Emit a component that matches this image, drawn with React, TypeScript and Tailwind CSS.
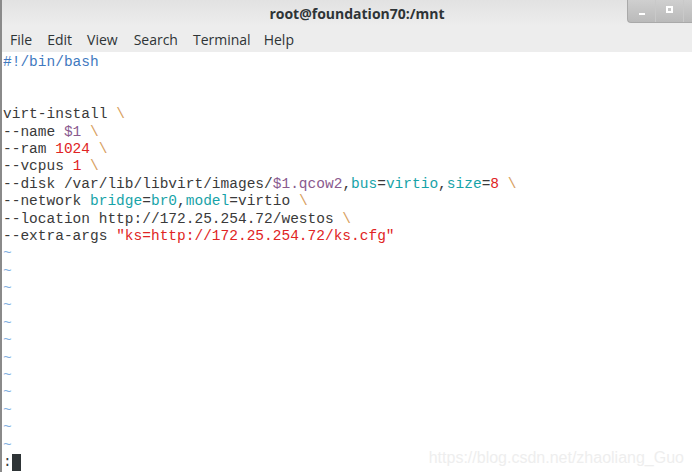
const mono = { fontFamily: '"Liberation Mono", "DejaVu Sans Mono", monospace' };

const C = {
  text: "text-[#3a3a3a]",
  bs: "text-[#d8a060]",
  comment: "text-[#3f79c0]",
  purple: "text-[#8a5a8e]",
  red: "text-[#e02424]",
  cyan: "text-[#17a3a8]",
  tilde: "text-[#80aee0]",
};

function Line({ children }: { children?: React.ReactNode }) {
  return <div className="h-[17.4px] whitespace-pre">{children ?? " "}</div>;
}

function Bs() {
  return <span className={C.bs}>\</span>;
}

export default function App() {
  const tildes = Array.from({ length: 12 });
  return (
    <div className="w-[692px] h-[472px] overflow-hidden bg-white flex flex-col border-l-2 border-[#8a8a8a]">
      {/* title bar */}
      <div className="relative h-[26px] bg-gradient-to-b from-[#e2e2e2] to-[#ededed] flex items-center justify-center">
        <span className="text-[14px] font-bold text-[#2e3436] pl-[20px]" style={{ fontFamily: '"Open Sans", "Noto Sans", sans-serif' }}>
          root@foundation70:/mnt
        </span>
        <div className="absolute right-0 top-0 h-[23px] w-[65px] rounded-bl-[4px] bg-gradient-to-b from-[#cfcfcf] to-[#bababa] border-l border-b border-[#a9a9a9] flex">
          <div className="w-[28px] flex items-center justify-center border-r border-[#c9c9c9]">
            <div className="w-[6px] h-[2px] bg-white mt-[6px]" />
          </div>
          <div className="w-[28px] flex items-center justify-center border-r border-[#c9c9c9]">
            <div className="w-[7px] h-[7px] border-2 border-white mb-[3px]" />
          </div>
        </div>
      </div>
      {/* menu bar */}
      <div
        className="h-[26px] bg-[#ededed] flex items-center gap-[15px] pl-[8px] text-[14px] text-[#2e3436]"
        style={{ fontFamily: '"Open Sans", "Noto Sans", sans-serif' }}
      >
        <span>File</span>
        <span>Edit</span>
        <span>View</span>
        <span className="ml-[1px]">Search</span>
        <span>Terminal</span>
        <span className="-ml-[2px]">Help</span>
      </div>
      {/* editor */}
      <div className={`relative flex-1 pl-[1px] pt-[2px] text-[14.5px] leading-[17.4px] ${C.text}`} style={mono}>
        <Line><span className={C.comment}>#!/bin/bash</span></Line>
        <Line />
        <Line />
        <Line>virt-install <Bs /></Line>
        <Line>--name <span className={C.purple}>$1</span> <Bs /></Line>
        <Line>--ram <span className={C.red}>1024</span> <Bs /></Line>
        <Line>--vcpus <span className={C.red}>1</span> <Bs /></Line>
        <Line>
          --disk /var/lib/libvirt/images/<span className={C.purple}>$1.qcow2</span>,<span className={C.cyan}>bus</span>=
          <span className={C.cyan}>virtio</span>,<span className={C.cyan}>size</span>=<span className={C.red}>8</span> <Bs />
        </Line>
        <Line>
          --network <span className={C.cyan}>bridge</span>=<span className={C.cyan}>br0</span>,<span className={C.cyan}>model</span>=virtio <Bs />
        </Line>
        <Line>--location http://172.25.254.72/westos <Bs /></Line>
        <Line>
          --extra-args <span className={C.red}>"ks=http://172.25.254.72/ks.cfg"</span>
        </Line>
        {tildes.map((_, i) => (
          <Line key={i}>
            <span className={C.tilde}>~</span>
          </Line>
        ))}
        <Line>
          :<span className="inline-block w-[9px] h-[17px] bg-[#2e3436] align-top" />
        </Line>
        <div
          className="absolute right-[8px] bottom-[6px] text-[16px] text-[#eeeeee]"
          style={{ fontFamily: '"Liberation Sans", Arial, sans-serif' }}
        >
          https://blog.csdn.net/zhaoliang_Guo
        </div>
      </div>
    </div>
  );
}
